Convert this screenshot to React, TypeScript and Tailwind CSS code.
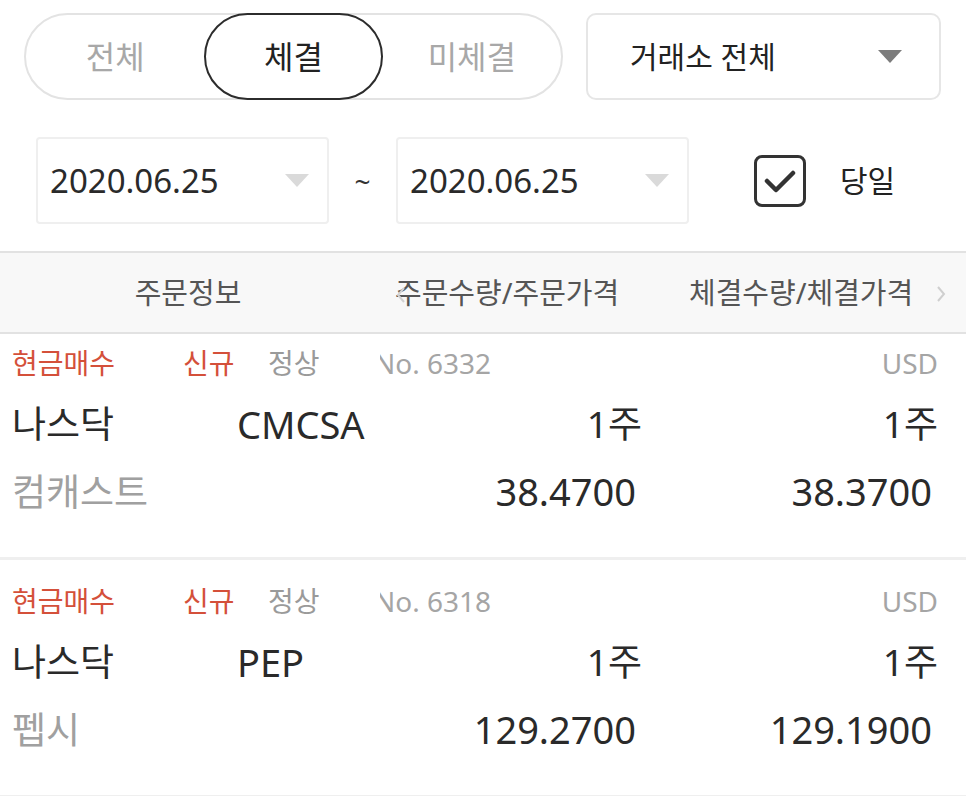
import React from "react"

const font = { fontFamily: '"Noto Sans", "Noto Sans CJK KR", sans-serif' }

function Caret({ className }: { className: string }) {
  return (
    <svg width="24" height="13" viewBox="0 0 24 13" className={className}>
      <path d="M0 0 H24 L12 13 Z" fill="currentColor" />
    </svg>
  )
}

type Order = {
  no: string
  symbol: string
  name: string
  qty: string
  orderPrice: string
  fillPrice: string
  first?: boolean
}

const orders: Order[] = [
  { no: "No. 6332", symbol: "CMCSA", name: "컴캐스트", qty: "1주", orderPrice: "38.4700", fillPrice: "38.3700", first: true },
  { no: "No. 6318", symbol: "PEP", name: "펩시", qty: "1주", orderPrice: "129.2700", fillPrice: "129.1900" },
]

function OrderRow({ o }: { o: Order }) {
  return (
    <div className={`border-b-[3px] border-[#efefef] pl-3 pr-[28px] pb-[48px] ${o.first ? "pt-[7px]" : "pt-[19px]"}`}>
      <div className="flex h-[44px] items-center text-[28px]">
        <span className="w-[171px] text-[#d4503a]">현금매수</span>
        <span className="w-[85px] text-[#d4503a]">신규</span>
        <span className="w-[112px] text-[#9a9a9a]">정상</span>
        <span className="inline-block overflow-hidden text-[#a5a5a5]">
          <span className="-ml-[6px] block">{o.no}</span>
        </span>
        <span className="ml-auto text-[#a5a5a5]">USD</span>
      </div>
      <div className="grid h-[78px] grid-cols-[225px_1fr_296px] items-center text-[37px] text-[#2a2a2a]">
        <span>나스닥</span>
        <span className="flex justify-between">
          <span className="text-[38px]">{o.symbol}</span>
          <span>{o.qty}</span>
        </span>
        <span className="text-right">{o.qty}</span>
      </div>
      <div className="grid h-[46px] grid-cols-[225px_1fr_296px] items-center text-[38px] text-[#2a2a2a]">
        <span className="text-[37px] text-[#a0a0a0]">{o.name}</span>
        <span className="pr-[6px] text-right">{o.orderPrice}</span>
        <span className="pr-[6px] text-right">{o.fillPrice}</span>
      </div>
    </div>
  )
}

export default function App() {
  return (
    <div style={font} className="h-[796px] w-[966px] overflow-hidden bg-white">
      {/* filter tabs + exchange select */}
      <div className="flex gap-[23px] pl-[24px] pr-[25px] pt-[13px]">
        <div className="grid h-[87px] w-[539px] grid-cols-3 rounded-full border-2 border-[#e3e3e3] text-[32px]">
          <div className="flex items-center justify-center text-[#a8a8a8]">전체</div>
          <div className="-my-[2px] flex items-center justify-center rounded-full border-[2.5px] border-[#2c2c2c] text-[#222]">
            체결
          </div>
          <div className="flex items-center justify-center text-[#a8a8a8]">미체결</div>
        </div>
        <div className="flex h-[87px] flex-1 items-center rounded-[10px] border-2 border-[#e6e6e6] pl-[42px] pr-[37px] text-[30px] text-[#222]">
          <span>거래소 전체</span>
          <Caret className="ml-auto text-[#7c7c7c]" />
        </div>
      </div>

      {/* date range */}
      <div className="mt-[37px] flex items-center pl-[36px]">
        <div className="flex h-[87px] w-[293px] items-center rounded-[4px] border-2 border-[#efefef] pl-[12px] pr-[18px] text-[33px] text-[#2a2a2a]">
          <span>2020.06.25</span>
          <Caret className="ml-auto text-[#dadada]" />
        </div>
        <span className="w-[67px] text-center text-[28px] text-[#333]">~</span>
        <div className="flex h-[87px] w-[293px] items-center rounded-[4px] border-2 border-[#efefef] pl-[12px] pr-[18px] text-[33px] text-[#2a2a2a]">
          <span>2020.06.25</span>
          <Caret className="ml-auto text-[#dadada]" />
        </div>
        <div className="ml-[65px] flex h-[52px] w-[52px] items-center justify-center rounded-[8px] border-[3.5px] border-[#333]">
          <svg width="32" height="26" viewBox="0 0 32 26">
            <path d="M3 13 L12 22 L29 5" fill="none" stroke="#333" strokeWidth="4.5" strokeLinecap="round" strokeLinejoin="round" />
          </svg>
        </div>
        <span className="ml-[34px] text-[30px] text-[#222]">당일</span>
      </div>

      {/* table header */}
      <div className="relative mt-[27px] flex h-[83px] items-center border-y-2 border-[#e2e2e2] bg-[#f8f8f8] text-[29px] text-[#555]">
        <span className="w-[376px] text-center">주문정보</span>
        <span className="w-[313px] pl-[19px]">주문수량/주문가격</span>
        <span>체결수량/체결가격</span>
        <svg width="10" height="18" viewBox="0 0 10 18" className="absolute left-[396px] top-[33px]">
          <path d="M8 2 L2 9 L8 16" fill="none" stroke="#d2d2d2" strokeWidth="2" />
        </svg>
        <svg width="10" height="18" viewBox="0 0 10 18" className="absolute left-[936px] top-[32px]">
          <path d="M2 2 L8 9 L2 16" fill="none" stroke="#cfcfcf" strokeWidth="2" />
        </svg>
      </div>

      {orders.map((o) => (
        <OrderRow key={o.no} o={o} />
      ))}
    </div>
  )
}
